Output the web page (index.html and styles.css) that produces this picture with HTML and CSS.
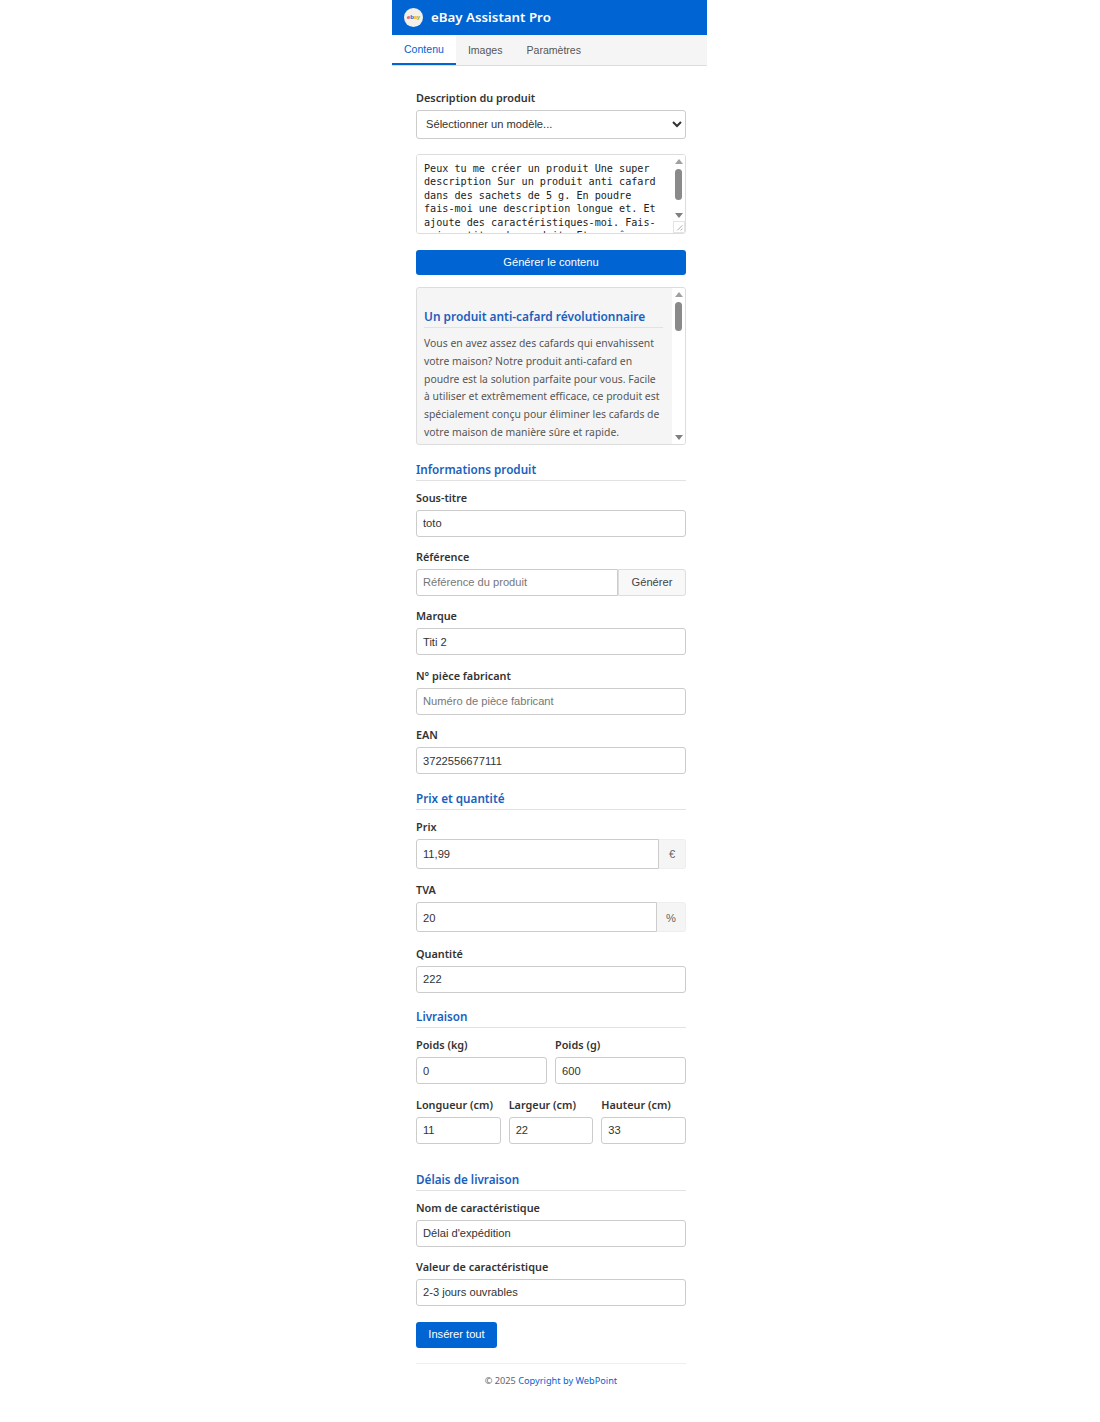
FILE: index.html
```html
<!DOCTYPE html>
<html lang="fr">
<head>
  <meta charset="UTF-8" />
  <title>eBay Assistant Pro</title>
  <link rel="stylesheet" href="styles.css">
</head>
<body>
  <div class="app">
    <header class="app-header">
      <div class="logo"><span class="e">e</span><span class="b">b</span><span class="a">a</span><span class="y">y</span></div>
      <h1>eBay Assistant Pro</h1>
    </header>

    <nav class="tabs">
      <div class="tab active">Contenu</div>
      <div class="tab">Images</div>
      <div class="tab">Paramètres</div>
    </nav>

    <main class="content">
      <label class="field-label">Description du produit</label>
      <select class="template-select">
        <option>Sélectionner un modèle...</option>
      </select>

      <!-- Prompt -->
      <div class="prompt-box">
        <textarea class="prompt" spellcheck="false">Peux tu me créer un produit Une super description Sur un produit anti cafard dans des sachets de 5 g. En poudre fais-moi une description longue et. Et ajoute des caractéristiques-moi. Fais-moi un titre du produit. Et en même</textarea>
        <div class="scrollbar prompt-bar">
          <span class="arrow up"></span>
          <span class="thumb"></span>
          <span class="arrow down"></span>
        </div>
        <svg class="resizer" viewBox="0 0 12 12"><path d="M10 4L4 10M10 8L8 10" stroke="#999" fill="none"/></svg>
      </div>

      <button class="btn btn-wide">Générer le contenu</button>

      <!-- Generated preview -->
      <div class="preview">
        <div class="preview-text">
          <h2>Un produit anti-cafard révolutionnaire</h2>
          <p>Vous en avez assez des cafards qui envahissent votre maison? Notre produit anti-cafard en poudre est la solution parfaite pour vous. Facile à utiliser et extrêmement efficace, ce produit est spécialement conçu pour éliminer les cafards de votre maison de manière sûre et rapide.</p>
        </div>
        <div class="scrollbar preview-bar">
          <span class="arrow up"></span>
          <span class="thumb"></span>
          <span class="arrow down"></span>
        </div>
      </div>

      <h3 class="section-title">Informations produit</h3>
      <div class="group">
        <label class="field-label">Sous-titre</label>
        <input class="input" value="toto" />
      </div>
      <div class="group">
        <label class="field-label">Référence</label>
        <div class="input-row">
          <input class="input" placeholder="Référence du produit" />
          <button class="btn-light">Générer</button>
        </div>
      </div>
      <div class="group">
        <label class="field-label">Marque</label>
        <input class="input" value="Titi 2" />
      </div>
      <div class="group">
        <label class="field-label">N° pièce fabricant</label>
        <input class="input" placeholder="Numéro de pièce fabricant" />
      </div>
      <div class="group">
        <label class="field-label">EAN</label>
        <input class="input" value="3722556677111" />
      </div>

      <h3 class="section-title">Prix et quantité</h3>
      <div class="group addon-group">
        <label class="field-label">Prix</label>
        <div class="addon-row">
          <input class="input tall" value="11,99" />
          <span class="addon euro">€</span>
        </div>
      </div>
      <div class="group addon-group">
        <label class="field-label">TVA</label>
        <div class="addon-row">
          <input class="input tall" value="20" />
          <span class="addon percent">%</span>
        </div>
      </div>
      <div class="group">
        <label class="field-label">Quantité</label>
        <input class="input" value="222" />
      </div>

      <h3 class="section-title">Livraison</h3>
      <div class="cols cols-2">
        <div class="group">
          <label class="field-label">Poids (kg)</label>
          <input class="input" value="0" />
        </div>
        <div class="group">
          <label class="field-label">Poids (g)</label>
          <input class="input" value="600" />
        </div>
      </div>
      <div class="cols cols-3">
        <div class="group">
          <label class="field-label">Longueur (cm)</label>
          <input class="input" value="11" />
        </div>
        <div class="group">
          <label class="field-label">Largeur (cm)</label>
          <input class="input" value="22" />
        </div>
        <div class="group">
          <label class="field-label">Hauteur (cm)</label>
          <input class="input" value="33" />
        </div>
      </div>

      <h3 class="section-title spaced">Délais de livraison</h3>
      <div class="group">
        <label class="field-label">Nom de caractéristique</label>
        <input class="input" value="Délai d'expédition" />
      </div>
      <div class="group">
        <label class="field-label">Valeur de caractéristique</label>
        <input class="input" value="2-3 jours ouvrables" />
      </div>

      <button class="btn btn-insert">Insérer tout</button>

      <footer class="footer">© 2025 <a href="#">Copyright by WebPoint</a></footer>
    </main>
  </div>
</body>
</html>
```

FILE: styles.css
```css
* { box-sizing: border-box; }
body {
  margin: 0;
  padding-right: 1px;
  background: white;
  font-family: 'Noto Sans', sans-serif;
  color: #333;
}
.app {
  width: 315px;
  margin: 0 auto;
}

/* Header */
.app-header {
  height: 35px;
  background-color: #0064d2;
  display: flex;
  align-items: center;
  padding: 0 0 1px 12px;
  gap: 8px;
}
.app-header h1 {
  margin: 0 0 1px;
  color: white;
  font-size: 13.3px;
  font-weight: 600;
}
.logo {
  width: 19px;
  height: 19px;
  border-radius: 50%;
  background: #f3efe9;
  display: flex;
  align-items: center;
  justify-content: center;
  font-family: 'Liberation Sans', sans-serif;
  font-size: 6px;
  font-weight: bold;
  letter-spacing: -0.2px;
}
.logo .e { color: #e53238; }
.logo .b { color: #0064d2; }
.logo .a { color: #f5af02; }
.logo .y { color: #86b817; }

/* Tabs */
.tabs {
  height: 31px;
  display: flex;
  background-color: #f5f5f5;
  border-bottom: 1px solid #ddd;
  font-family: 'Liberation Sans', sans-serif;
  font-size: 10.55px;
}
.tab {
  padding: 0 12px;
  line-height: 31px;
  color: #555;
}
.tab.active {
  height: 30px;
  background: white;
  color: #0064d2;
  border-bottom: 2px solid #0064d2;
  line-height: 29px;
}

.content {
  padding: 23px 21px 0 24px;
}

.field-label {
  display: block;
  height: 17px;
  line-height: 17px;
  margin-bottom: 4px;
  font-size: 10.85px;
  font-weight: 600;
  color: #333;
}

.template-select {
  display: block;
  width: 100%;
  height: 29px;
  padding: 0 5px 2px;
  background: white;
  border: 1px solid #ccc;
  border-radius: 3px;
  font-family: 'Liberation Sans', sans-serif;
  font-size: 11.15px;
  color: #333;
}

.prompt-box {
  position: relative;
  height: 80px;
  margin-top: 15px;
  border: 1px solid #ddd;
  border-radius: 3px;
  overflow: hidden;
}
.prompt {
  display: block;
  width: 100%;
  height: 100%;
  padding: 7px 24px 0 7px;
  border: none;
  resize: none;
  overflow: hidden;
  font-family: 'DejaVu Sans Mono', monospace;
  font-size: 10.15px;
  line-height: 13.4px;
  color: #222;
}

/* fake windows scrollbars */
.scrollbar {
  position: absolute;
  top: 0;
  right: 0;
  width: 13px;
  background: #fff;
}
.prompt-bar { height: 67px; }
.preview-bar { bottom: 0; }
.arrow {
  position: absolute;
  left: 2.5px;
  width: 0;
  height: 0;
  border-left: 4px solid transparent;
  border-right: 4px solid transparent;
}
.arrow.up {
  top: 4px;
  border-bottom: 5px solid #a0a0a0;
}
.arrow.down {
  bottom: 4px;
  border-top: 5px solid #808080;
}
.thumb {
  position: absolute;
  left: 3px;
  top: 14px;
  width: 7px;
  background: #8a8a8a;
  border-radius: 4px;
}
.prompt-bar .thumb { height: 31px; }
.preview-bar .thumb { height: 29px; }
.resizer {
  position: absolute;
  right: 0;
  bottom: 0;
  width: 12px;
  height: 12px;
  background: white;
  border: 1px solid #e4e4e4;
}

.btn {
  display: block;
  padding: 0 0 2px;
  background-color: #0064d2;
  color: white;
  border: none;
  border-radius: 3px;
  font-family: 'Liberation Sans', sans-serif;
  font-size: 11.15px;
  height: 25px;
}
.btn-wide {
  width: 100%;
  margin-top: 16px;
}
.btn-insert {
  width: 81px;
  height: 26px;
  margin-top: 16px;
}

.preview {
  position: relative;
  height: 158px;
  margin-top: 12px;
  background: #f5f5f5;
  border: 1px solid #ddd;
  border-radius: 3px;
  overflow: hidden;
}
.preview-text {
  padding: 19px 22px 0 7px;
}
.preview h2 {
  margin: 0 0 7px;
  padding-bottom: 2px;
  border-bottom: 1px solid #e2e2e2;
  font-size: 11.9px;
  font-weight: 600;
  line-height: 18px;
  color: #1a5fbd;
}
.preview p {
  margin: 0;
  font-size: 10.4px;
  line-height: 17.8px;
  color: #555;
}

.section-title {
  margin: 15.5px 0 8px;
  padding-bottom: 2px;
  border-bottom: 1px solid #e2e2e2;
  font-size: 11.7px;
  font-weight: 600;
  line-height: 17px;
  color: #1a5fbd;
}
.section-title.spaced { margin-top: 15.3px; }

.group { margin-bottom: 11.4px; }
.input {
  display: block;
  width: 100%;
  height: 27px;
  padding: 0 6px;
  background: white;
  border: 1px solid #ccc;
  border-radius: 3px;
  font-family: 'Liberation Sans', sans-serif;
  font-size: 11.15px;
  color: #333;
}
.input::placeholder { color: #777; }
.input.tall {
  height: 30.4px;
  padding-top: 1px;
}

.input-row {
  display: flex;
}
.btn-light {
  flex: none;
  width: 68px;
  height: 27px;
  background: #f8f8f8;
  border: 1px solid #ddd;
  border-radius: 0 3px 3px 0;
  font-family: 'Liberation Sans', sans-serif;
  font-size: 11.15px;
  color: #444;
}
.input-row .input { border-radius: 3px 0 0 3px; }

.addon-group { margin-bottom: 12.1px; }
.addon-row { display: flex; }
.addon-row .input { border-radius: 3px 0 0 3px; }
.addon {
  flex: none;
  height: 30.4px;
  line-height: 29px;
  text-align: center;
  background: #f5f5f5;
  border: 1px solid #eee;
  border-left: none;
  border-radius: 0 3px 3px 0;
  font-family: 'Liberation Sans', sans-serif;
  font-size: 11.15px;
  color: #666;
}
.addon.euro { width: 27px; }
.addon.percent {
  width: 29px;
  line-height: 31px;
}

.cols {
  display: grid;
  gap: 8px;
  margin-bottom: 0.4px;
}
.cols-2 { grid-template-columns: 1fr 1fr; }
.cols-3 { grid-template-columns: 1fr 1fr 1fr; }

.footer {
  margin-top: 15px;
  padding-top: 9px;
  border-top: 1px solid #eee;
  text-align: center;
  font-size: 9.2px;
  line-height: 16px;
  color: #666;
}
.footer a {
  color: #0064d2;
  text-decoration: none;
}
```
